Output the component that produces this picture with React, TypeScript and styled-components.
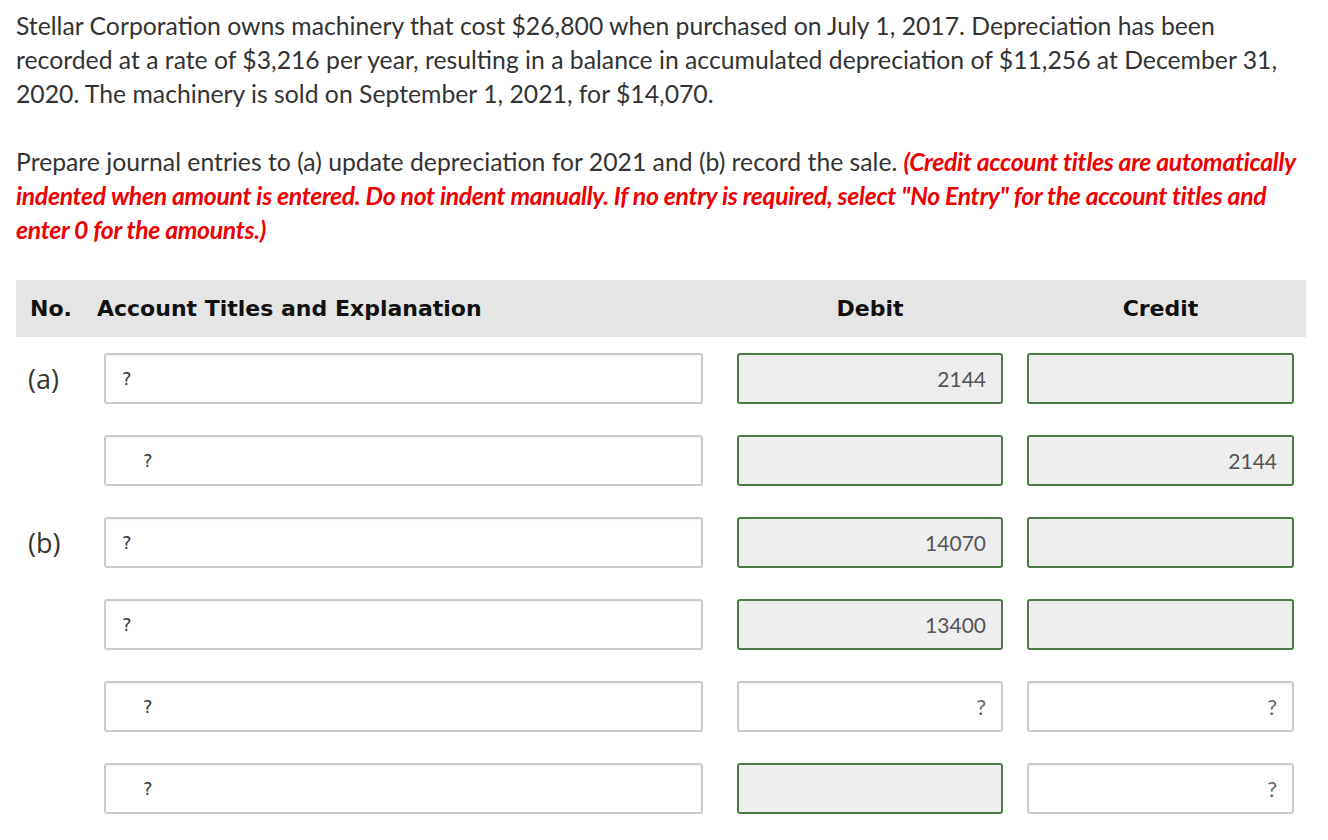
import styled, { createGlobalStyle } from 'styled-components';

const GlobalStyle = createGlobalStyle`
  body {
    margin: 0;
    background: #ffffff;
  }
`;

const Page = styled.div`
  padding: 9px 16px 0 16px;
  width: 1328px;
  box-sizing: border-box;
  font-family: Lato, 'Open Sans', sans-serif;
  color: #333333;
`;

const Para = styled.p`
  margin: 0 0 34px 0;
  font-size: 24.75px;
  line-height: 34px;
  white-space: nowrap;
`;

const Note = styled.span`
  color: #ee0000;
  font-weight: 700;
  font-style: italic;
  letter-spacing: -0.3px;
  margin-left: 6px;
`;

const Table = styled.div`
  width: 1290px;
  margin-top: -1px;
`;

const Columns = styled.div`
  display: grid;
  grid-template-columns: 88px 599px 300px 291px;
  align-items: center;

  & > :nth-child(3) {
    margin-left: 34px;
  }
  & > :nth-child(4) {
    margin-left: 24px;
  }
`;

const HeaderRow = styled(Columns)`
  background: #e5e5e5;
  height: 57px;
  font-family: 'DejaVu Sans', Verdana, sans-serif;
  font-weight: 700;
  font-size: 22px;
  color: #111111;
`;

const HeadCell = styled.div<{ $center?: boolean; $pad?: number; $shift?: number }>`
  text-align: ${({ $center }) => ($center ? 'center' : 'left')};
  padding-left: ${({ $pad }) => $pad ?? 0}px;
  margin-left: ${({ $shift }) => $shift ?? 0}px;
  white-space: nowrap;
`;

const Body = styled.div`
  padding-top: 16px;
  display: flex;
  flex-direction: column;
  gap: 31px;
`;

const Label = styled.div`
  font-family: 'Open Sans', Lato, sans-serif;
  font-size: 27px;
  color: #333333;
  padding-left: 12px;
`;

const Field = styled.div<{ $filled?: boolean; $right?: boolean; $indent?: boolean }>`
  height: 51px;
  box-sizing: border-box;
  border-radius: 3px;
  border: ${({ $filled }) => ($filled ? '2px solid #4b7a47' : '2px solid #cccccc')};
  background: ${({ $filled }) => ($filled ? '#eeeeee' : '#ffffff')};
  box-shadow: ${({ $filled }) => ($filled ? 'none' : 'inset 0 1px 2px rgba(0,0,0,0.06)')};
  display: flex;
  align-items: center;
  justify-content: ${({ $right }) => ($right ? 'flex-end' : 'flex-start')};
  padding: 0 ${({ $right }) => ($right ? '15px' : '0')} 0
    ${({ $indent }) => ($indent ? '37px' : '16px')};
`;

const Ask = styled.span`
  font-family: 'DejaVu Sans', Verdana, sans-serif;
  font-size: 18px;
  color: #3a3a3a;
`;

const Amount = styled.span`
  font-family: Lato, sans-serif;
  font-size: 21px;
  color: #555555;
`;

const AmountAsk = styled.span`
  font-family: Lato, sans-serif;
  font-size: 22px;
  color: #666666;
`;

type Cell = { filled: boolean; value?: string };
type Row = { label?: string; indent: boolean; debit: Cell; credit: Cell };

const rows: Row[] = [
  { label: '(a)', indent: false, debit: { filled: true, value: '2144' }, credit: { filled: true } },
  { indent: true, debit: { filled: true }, credit: { filled: true, value: '2144' } },
  { label: '(b)', indent: false, debit: { filled: true, value: '14070' }, credit: { filled: true } },
  { indent: false, debit: { filled: true, value: '13400' }, credit: { filled: true } },
  { indent: true, debit: { filled: false, value: '?' }, credit: { filled: false, value: '?' } },
  { indent: true, debit: { filled: true }, credit: { filled: false, value: '?' } },
];

function AmountField({ cell }: { cell: Cell }) {
  return (
    <Field $filled={cell.filled} $right>
      {cell.value === '?' ? <AmountAsk>?</AmountAsk> : cell.value ? <Amount>{cell.value}</Amount> : null}
    </Field>
  );
}

export default function App() {
  return (
    <>
      <GlobalStyle />
      <Page>
        <Para>
          Stellar Corporation owns machinery that cost $26,800 when purchased on July 1, 2017. Depreciation has been
          <br />
          recorded at a rate of $3,216 per year, resulting in a balance in accumulated depreciation of $11,256 at December 31,
          <br />
          2020. The machinery is sold on September 1, 2021, for $14,070.
        </Para>
        <Para>
          Prepare journal entries to (a) update depreciation for 2021 and (b) record the sale.
          <Note>
            (Credit account titles are automatically
            <br />
            indented when amount is entered. Do not indent manually. If no entry is required, select "No Entry" for the account titles and
            <br />
            enter 0 for the amounts.)
          </Note>
        </Para>
        <Table>
          <HeaderRow>
            <HeadCell $pad={14}>No.</HeadCell>
            <HeadCell $shift={-7}>Account Titles and Explanation</HeadCell>
            <HeadCell $center>Debit</HeadCell>
            <HeadCell $center>Credit</HeadCell>
          </HeaderRow>
          <Body>
            {rows.map((row, i) => (
              <Columns key={i}>
                <Label>{row.label ?? ''}</Label>
                <Field $indent={row.indent}>
                  <Ask>?</Ask>
                </Field>
                <AmountField cell={row.debit} />
                <AmountField cell={row.credit} />
              </Columns>
            ))}
          </Body>
        </Table>
      </Page>
    </>
  );
}
